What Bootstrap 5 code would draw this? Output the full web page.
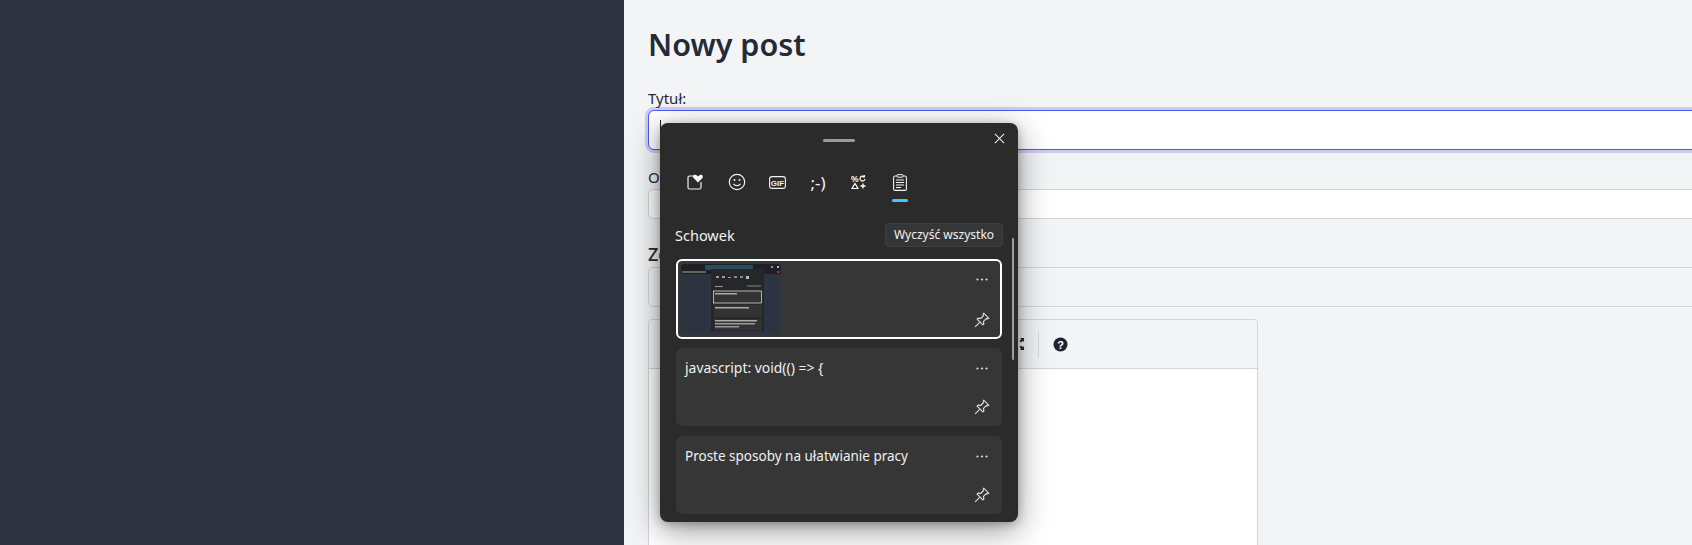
<!doctype html>
<html lang="pl">
<head>
<meta charset="utf-8">
<title>Nowy post</title>
<link href="https://cdn.jsdelivr.net/npm/bootstrap@5.3.0/dist/css/bootstrap.min.css" rel="stylesheet">
<style>
html,body{height:545px;overflow:hidden}
body{background:#f3f4f6;color:#252b36;font-family:"Noto Sans",sans-serif}
.sidebar-pane{width:624px;height:545px;background:#2d3340;flex:none}
.main-pane{width:1068px;flex:none;padding:25px 0 0 24px;position:relative;height:545px;overflow:hidden}
.main-inner{width:1400px}
.page-title{font-size:30.500px;font-weight:600;line-height:38px;margin:0 0 23px;color:#252b36}
.fld-label{display:block;font-size:15px;line-height:24px;margin:0;color:#252b36}
.fld-input{border:1px solid #d1d5db;border-radius:5px;background:#fff;box-shadow:none}
.fld-title{height:40px;border:1px solid #4a5bf2;box-shadow:0 0 0 3px #c9cdf6;border-radius:6px;margin-bottom:15px}
.fld-desc{height:30px;margin-bottom:15px}
.sec-label{font-size:18px;font-weight:500;line-height:24px;margin:0 0 1px;padding-top:8px;color:#252b36}
.fld-img{height:40px;background:#f3f4f6;margin-bottom:12px}
.editor-box{width:610px;height:300px;border:1px solid #d1d5db;border-radius:4px;background:#fff;overflow:hidden}
.editor-bar{height:49px;background:#f3f4f6;border-bottom:1px solid #d1d5db;padding-left:362px}
.bar-sep{width:1px;height:27px;background:#d8dbe0;margin:0 14px 0 13px}
.caret-mark{position:absolute;left:36px;top:120px;width:1px;height:20px;background:#222}
.picker{position:absolute;left:660px;top:123px;width:358px;height:399px;background:#2b2b2b;border-radius:8px;color:#f2f2f2;box-shadow:0 8px 32px rgba(0,0,0,.42),0 2px 8px rgba(0,0,0,.25);font-size:14px;padding:0 16px;overflow:hidden}
.picker-top{height:30px;position:relative}
.drag-handle{width:32px;height:3px;border-radius:2px;background:#9a9a9a;position:absolute;left:147px;top:16px}
.close-x{position:absolute;right:-3px;top:10px;width:11px;height:11px}
.tab-row{height:41px;margin-top:8px}
.tab-ico{position:absolute;top:47px;height:24px;display:flex;align-items:center;justify-content:center}
.emoticon{font-size:17px;font-weight:400;color:#f2f2f2;line-height:1}
.tab-line{position:absolute;left:232px;top:76px;width:16px;height:3px;border-radius:2px;background:#4cc2ff}
.clip-head{height:24px;margin:21px 0 12px 0}
.clip-title{font-size:14.500px;line-height:24px;margin-left:-1px}
.clear-btn{height:24px;width:118px;padding:0;background:#353637;border:1px solid #3f4041;border-radius:4px;color:#f2f2f2;font-size:12px;line-height:20px;margin-right:-1px}
.clear-btn:hover{color:#f2f2f2;background:#353637;border-color:#3f4041}
.clip-card{height:78px;background:#363636;border-radius:6px;margin-bottom:10px;position:relative;padding:9px 9px;font-size:13.500px;line-height:22px;color:#f0f0f0}
.js-line{font-size:13.900px}
.clip-first{height:80px;margin-bottom:9px;border:2px solid #fff;padding:3px}
.clip-dots{position:absolute;right:14px;top:19px;width:12px;height:3px}
.clip-first .clip-dots{top:17px;right:12px}
.clip-pin{position:absolute;right:12px;bottom:11px;width:16px;height:16px;display:block}
.clip-first .clip-pin{right:10px;bottom:9px}
.thumb-svg{display:block;width:100px;height:70px;border-radius:4px}
.picker-scroll{position:absolute;left:352px;top:115px;width:2px;height:122px;background:#9d9d9d;border-radius:1px}
</style>
</head>
<body>
<div class="d-flex">
  <div class="sidebar-pane"></div>
  <main class="main-pane">
    <div class="main-inner">
    <h1 class="page-title">Nowy post</h1>
    <label class="fld-label">Tytuł:</label>
    <input class="form-control fld-input fld-title" type="text">
    <span class="caret-mark"></span>
    <label class="fld-label">Opis:</label>
    <input class="form-control fld-input fld-desc" type="text">
    <div class="sec-label">Zdjęcie</div>
    <div class="fld-input fld-img"></div>
    <div class="editor-box">
      <div class="editor-bar d-flex align-items-center">
        <svg width="14" height="14" viewBox="0 0 14 14"><path d="M1 1h4L3.800 2.200 5.500 4 4 5.500 2.200 3.800 1 5zM13 1v4l-1.200-1.200L10 5.500 8.500 4l1.800-1.800L9 1zM1 13V9l1.200 1.200L4 8.500 5.500 10l-1.700 1.800L5 13zM13 13H9l1.200-1.200L8.500 10 10 8.500l1.800 1.700L13 9z" fill="#1f2937"/></svg>
        <span class="bar-sep"></span>
        <svg width="15" height="15" viewBox="0 0 15 15"><circle cx="7.500" cy="7.500" r="7" fill="#1f2530"/><text x="7.500" y="11.500" text-anchor="middle" font-family="Liberation Sans" font-weight="700" font-size="11" fill="#fff">?</text></svg>
      </div>
    </div>
    </div>
  </main>
</div>

<aside class="picker">
  <div class="picker-top">
    <span class="drag-handle"></span>
    <svg class="close-x" viewBox="0 0 12 12"><path d="M1 1l10 10M11 1L1 11" stroke="#eee" stroke-width="1.100" fill="none"/></svg>
  </div>

  <span class="tab-ico" style="left:25px;width:20px"><svg width="18" height="18" viewBox="0 0 18 18"><path d="M9 3H3.500A1.500 1.500 0 0 0 2 4.500v10A1.500 1.500 0 0 0 3.500 16h10a1.500 1.500 0 0 0 1.500-1.500V9" stroke="#f2f2f2" stroke-width="1.200" fill="none"/><path d="M12 9.500L7.800 5.300C6.300 3.600 7.900 1 10 2c1 .4 1.600 1.100 2 1.600.4-.5 1-1.200 2-1.600 2.100-1 3.700 1.600 2.200 3.300z" fill="#fff"/></svg></span>
  <span class="tab-ico" style="left:67px;width:20px"><svg width="18" height="18" viewBox="0 0 18 18"><circle cx="9" cy="9" r="7.700" stroke="#f2f2f2" stroke-width="1.200" fill="none"/><circle cx="6.500" cy="7" r="1" fill="#f2f2f2"/><circle cx="11.500" cy="7" r="1" fill="#f2f2f2"/><path d="M5.500 10.800c1.800 2.400 5.200 2.400 7 0" stroke="#f2f2f2" stroke-width="1.200" fill="none"/></svg></span>
  <span class="tab-ico" style="left:106px;width:22px"><svg width="17" height="13" viewBox="0 0 17 13"><rect x=".6" y=".6" width="15.800" height="11.800" rx="2.500" stroke="#f2f2f2" stroke-width="1.100" fill="none"/><text x="8.500" y="9.500" text-anchor="middle" font-family="Liberation Sans" font-size="8" font-weight="700" fill="#f2f2f2">GIF</text></svg></span>
  <span class="tab-ico emoticon" style="left:146px;width:24px">;-)</span>
  <span class="tab-ico" style="left:187px;width:24px"><svg width="16" height="16" viewBox="0 0 16 16"><text x="0" y="7.500" font-family="Liberation Sans" font-size="8.500" font-weight="700" fill="#fff">%</text><path d="M13 2.500a2.500 2.500 0 1 0 1 2.500M13.300 1v2h-2" stroke="#fff" stroke-width="1.200" fill="none"/><path d="M4 9.500l3 5H1z" stroke="#fff" stroke-width="1.200" fill="none"/><path d="M12 9.500v5M9.500 12h5" stroke="#fff" stroke-width="1.300" fill="none"/></svg></span>
  <span class="tab-ico" style="left:230px;width:20px"><svg width="14" height="17" viewBox="0 0 14 17"><rect x=".6" y="2" width="12.800" height="14.400" rx="1.500" stroke="#f2f2f2" stroke-width="1.100" fill="none"/><rect x="4" y=".6" width="6" height="2.600" rx=".8" fill="#2b2b2b" stroke="#f2f2f2" stroke-width="1"/><path d="M3 6h8M3 8.500h8M3 11h8M3 13.500h5" stroke="#f2f2f2" stroke-width="1"/></svg></span>
  <span class="tab-line"></span>

  <div class="tab-row"></div>
  <div class="clip-head d-flex justify-content-between align-items-center">
    <span class="clip-title">Schowek</span>
    <button class="btn clear-btn" type="button">Wyczyść wszystko</button>
  </div>

  <div class="clip-card clip-first">
    <svg class="thumb-svg" viewBox="0 0 100 70">
      <rect width="100" height="70" fill="#2d3340"/>
      <rect width="100" height="10" fill="#1f1f25"/>
      <rect x="24" y="1" width="48" height="5" fill="#24505e"/>
      <rect x="30" y="5" width="53" height="62" fill="#26272a"/>
      <rect x="35" y="12" width="3" height="2" fill="#999"/><rect x="41" y="12" width="3" height="2" fill="#999"/><rect x="47" y="13" width="3" height="1" fill="#999"/><rect x="53" y="12" width="3" height="2" fill="#888"/><rect x="59" y="12" width="3" height="2" fill="#888"/><rect x="65" y="12" width="3" height="3" fill="#bbb"/>
      <rect x="34" y="22" width="8" height="1" fill="#999"/><rect x="66" y="21" width="14" height="2" fill="#555"/>
      <rect x="32.500" y="27" width="48" height="12" fill="#333" stroke="#eee" stroke-width=".7"/>
      <rect x="34" y="29" width="22" height="1.500" fill="#aaa"/>
      <rect x="33" y="41" width="48" height="12" fill="#333"/><rect x="34" y="43" width="34" height="1.500" fill="#aaa"/>
      <rect x="33" y="55" width="48" height="11" fill="#333"/><rect x="34" y="56" width="42" height="1.500" fill="#aaa"/><rect x="34" y="59" width="40" height="1.500" fill="#999"/><rect x="34" y="62" width="24" height="1.500" fill="#999"/>
      <rect x="90" y="2" width="2" height="2" fill="#a8a"/><rect x="96" y="2" width="2" height="2" fill="#bbb"/>
      <rect x="1" y="7" width="24" height="2" fill="#665"/><rect x="96" y="7" width="3" height="2" fill="#a24"/>
    </svg>
    <svg class="clip-dots" viewBox="0 0 12 3"><circle cx="1.500" cy="1.500" r="1.100" fill="#ddd"/><circle cx="6" cy="1.500" r="1.100" fill="#ddd"/><circle cx="10.500" cy="1.500" r="1.100" fill="#ddd"/></svg>
    <svg class="clip-pin" viewBox="0 0 14 14"><path d="M8.500 1L13 5.500l-1 .5-1.300-.2L8.300 8.200 8.600 10.500 7.800 11.300 2.700 6.200 3.500 5.400 5.800 5.700 8.200 3.300 8 2zM5.200 8.800L1 13" stroke="#ddd" stroke-width="1" fill="none" stroke-linejoin="round"/></svg>
  </div>

  <div class="clip-card">
    <span class="js-line">javascript: void(() =&gt; {</span>
    <svg class="clip-dots" viewBox="0 0 12 3"><circle cx="1.500" cy="1.500" r="1.100" fill="#ddd"/><circle cx="6" cy="1.500" r="1.100" fill="#ddd"/><circle cx="10.500" cy="1.500" r="1.100" fill="#ddd"/></svg>
    <svg class="clip-pin" viewBox="0 0 14 14"><path d="M8.500 1L13 5.500l-1 .5-1.300-.2L8.300 8.200 8.600 10.500 7.800 11.300 2.700 6.200 3.500 5.400 5.800 5.700 8.200 3.300 8 2zM5.200 8.800L1 13" stroke="#ddd" stroke-width="1" fill="none" stroke-linejoin="round"/></svg>
  </div>

  <div class="clip-card">
    Proste sposoby na ułatwianie pracy
    <svg class="clip-dots" viewBox="0 0 12 3"><circle cx="1.500" cy="1.500" r="1.100" fill="#ddd"/><circle cx="6" cy="1.500" r="1.100" fill="#ddd"/><circle cx="10.500" cy="1.500" r="1.100" fill="#ddd"/></svg>
    <svg class="clip-pin" viewBox="0 0 14 14"><path d="M8.500 1L13 5.500l-1 .5-1.300-.2L8.300 8.200 8.600 10.500 7.800 11.300 2.700 6.200 3.500 5.400 5.800 5.700 8.200 3.300 8 2zM5.200 8.800L1 13" stroke="#ddd" stroke-width="1" fill="none" stroke-linejoin="round"/></svg>
  </div>

  <span class="picker-scroll"></span>
</aside>
<script src="https://cdn.jsdelivr.net/npm/bootstrap@5.3.0/dist/js/bootstrap.bundle.min.js"></script>
</body>
</html>
